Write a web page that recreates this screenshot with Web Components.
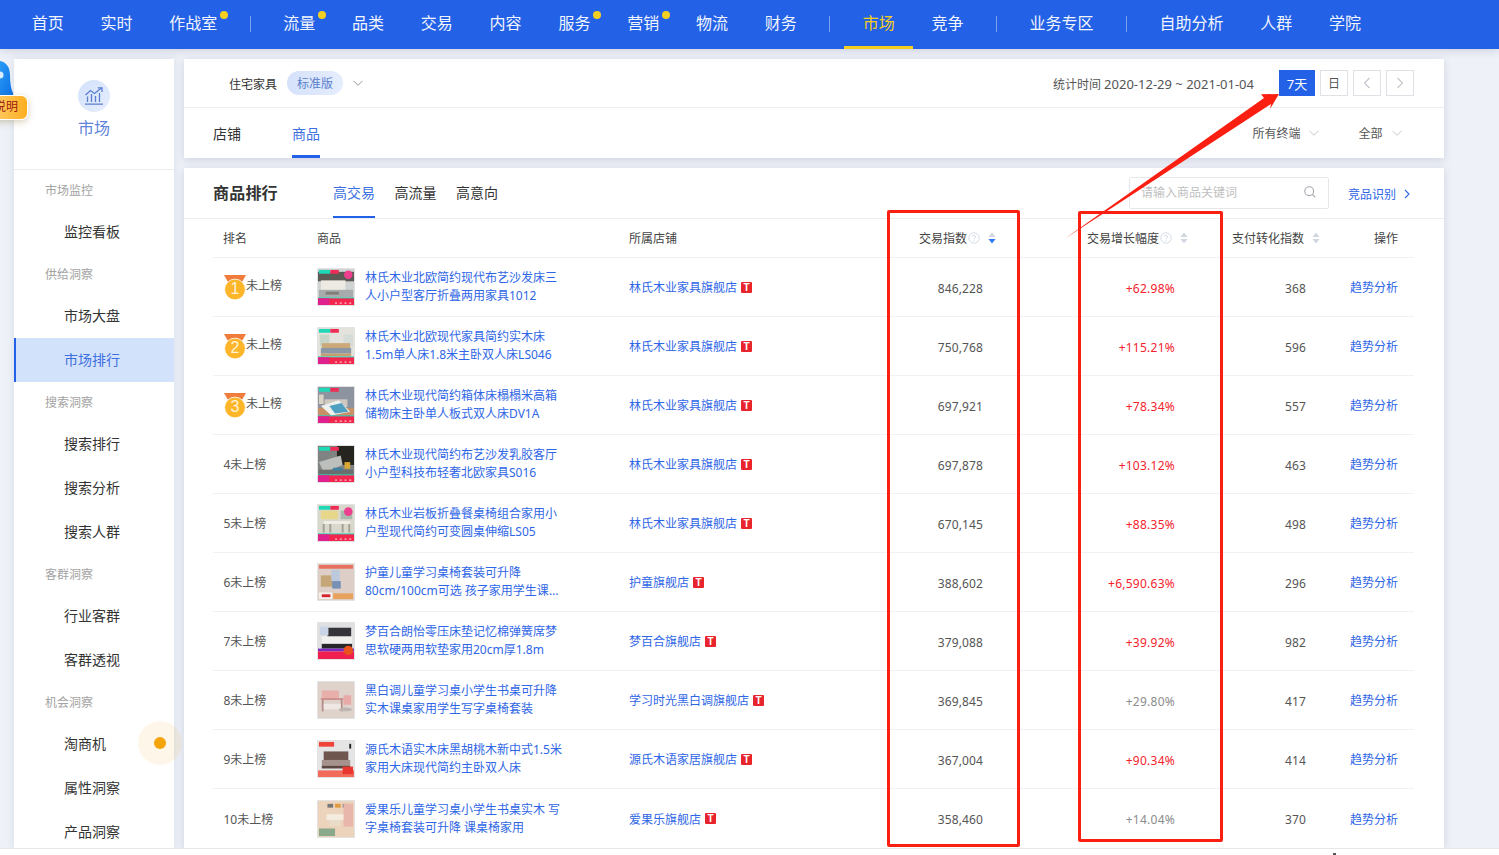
<!DOCTYPE html>
<html lang="zh">
<head>
<meta charset="utf-8">
<title>商品排行</title>
<style>
  html, body { margin: 0; padding: 0; background: #fff; }
  body { width: 1499px; height: 855px; overflow: hidden; font-family: "Noto Sans", "Noto Sans CJK SC", sans-serif; color: #333; }
</style>
</head>
<body>
<market-page></market-page>

<script>
(function () {
  const BLUE = '#2361e6';
  const chevron = (color, w = 10) => `<svg width="${w}" height="${w}" viewBox="0 0 10 10" fill="none" stroke="${color}" stroke-width="1"><path d="M0.5 2.8 5 7.3 9.5 2.8"/></svg>`;

  // 顶部导航
  class TopNav extends HTMLElement {
    constructor() {
      super();
      const items = [
        ['首页'], ['实时'], ['作战室', 'dot'], '|',
        ['流量', 'dot'], ['品类'], ['交易'], ['内容'], ['服务', 'dot'], ['营销', 'dot'], ['物流'], ['财务'], '|',
        ['市场', 'on'], ['竞争'], '|',
        ['业务专区'], '|',
        ['自助分析'], ['人群'], ['学院']
      ];
      const html = items.map(i => i === '|' ? '<i class="sep"></i>' :
        `<a class="${i[1] || ''}">${i[0]}</a>`).join('');
      this.attachShadow({ mode: 'open' }).innerHTML = `
        <style>
          :host { display: flex; align-items: stretch; height: 49px; padding-left: 13.4px; background: ${BLUE}; color: #fff; font-size: 16px; box-shadow: 0 2px 8px rgba(60,80,120,.18); position: relative; z-index: 2; }
          a { position: relative; display: flex; align-items: center; padding: 0 18.375px 3px; box-sizing: border-box; line-height: 20px; color: #f1f5fd; }
          a.dot::after { content: ''; position: absolute; top: 11px; right: 7.4px; width: 8px; height: 8px; border-radius: 50%; background: #f5cf20; }
          a.on { color: #f5cf20; border-bottom: 3px solid #f5cf20; padding-bottom: 0; }
          .sep { width: 1px; height: 16px; margin: 16px 14.125px 0; background: rgba(255,255,255,.4); }
        </style>${html}`;
    }
  }

  // 左侧菜单
  class SideMenu extends HTMLElement {
    constructor() {
      super();
      const groups = [
        ['市场监控', ['监控看板']],
        ['供给洞察', ['市场大盘', '市场排行']],
        ['搜索洞察', ['搜索排行', '搜索分析', '搜索人群']],
        ['客群洞察', ['行业客群', '客群透视']],
        ['机会洞察', ['淘商机', '属性洞察', '产品洞察']]
      ];
      const list = groups.map(g => `<div class="group">${g[0]}</div>` +
        g[1].map(n => `<div class="item${n === '市场排行' ? ' on' : ''}">${n}</div>`).join('')).join('');
      this.attachShadow({ mode: 'open' }).innerHTML = `
        <style>
          :host { display: block; width: 160px; background: #fff; box-shadow: 0 0 8px rgba(60,80,120,.12); overflow: hidden; flex: none; }
          .head { height: 111px; box-sizing: border-box; padding-top: 21px; border-bottom: 1px solid #ebedf0; display: flex; flex-direction: column; align-items: center; }
          .ico { width: 32px; height: 32px; border-radius: 50%; background: linear-gradient(135deg, #d3e1fa, #e6eefe); display: flex; align-items: center; justify-content: center; }
          .name { margin-top: 4px; font-size: 16px; line-height: 24px; color: #5d84d8; }
          .group { height: 40px; line-height: 42px; padding-left: 31px; font-size: 12px; color: #a3a3a3; }
          .item { height: 44px; line-height: 44px; padding-left: 50px; font-size: 14px; color: #333; }
          .item.on { margin: 0; padding-left: 48px; border-left: 2px solid ${BLUE}; background: #d3e2fb; color: #3c70e0; }
        </style>
        <div class="head">
          <div class="ico"><svg width="20" height="20" viewBox="0 0 20 20" fill="none" stroke="#5a7fd0" stroke-width="1.3">
            <path d="M1 18.2H19M3.5 16V10.5M7.5 16V8M11.5 16V10M15.5 16V7"/><path d="M1.5 9 6.5 4.5 10.5 7.5 17.5 2"/><path d="M13.8 1.8H18V6"/></svg></div>
          <div class="name">市场</div>
        </div>
        <div class="list">${list}</div>`;
    }
  }

  // 行业筛选卡片
  class FilterCard extends HTMLElement {
    constructor() {
      super();
      this.attachShadow({ mode: 'open' }).innerHTML = `
        <style>
          :host { display: block; background: #fff; box-shadow: 0 2px 8px rgba(60,80,120,.18); font-size: 12px; }
          .r1 { height: 48px; display: flex; align-items: center; padding: 0 30px 0 45px; border-bottom: 1px solid #ebedf0; }
          .low { padding-top: 2px; }
          .pill { margin-left: 10px; width: 56px; height: 24px; border-radius: 12px; line-height: 25px; text-align: center; background: linear-gradient(90deg, #d5e2fa, #e5edfd); color: #5a80cc; }
          .cat { margin-left: 10px; line-height: 0; }
          .date { margin-left: auto; color: #555; margin-right: 25px; white-space: nowrap; }
          .date b { font-weight: 400; font-size: 13px; }
          .btn { width: 28px; height: 26px; box-sizing: border-box; margin-left: 5px; border: 1px solid #dfe1e6; display: flex; align-items: center; justify-content: center; color: #555; }
          .btn.on { width: 36px; margin-left: 0; border: 0; background: ${BLUE}; color: #fff; font-size: 13px; }
          .r2 { height: 50px; display: flex; align-items: stretch; padding: 0 42.5px 0 29px; font-size: 14px; }
          .tab { display: flex; align-items: center; box-sizing: border-box; padding-bottom: 1px; color: #333; }
          .tab.on { margin-left: 51px; color: #3c70e0; border-bottom: 3px solid ${BLUE}; padding-top: 2px; padding-bottom: 0; }
          .sel { display: flex; align-items: center; gap: 9px; font-size: 12px; color: #555; }
          .sel span { line-height: 0; }
          .sel.a { margin-left: auto; }
          .sel.b { margin-left: 39px; }
        </style>
        <div class="r1">
          <span class="low">住宅家具</span><span class="pill">标准版</span><span class="cat">${chevron('#9a9a9a')}</span>
          <span class="date low">统计时间 <b>2020-12-29 ~ 2021-01-04</b></span>
          <span class="btn on">7天</span><span class="btn">日</span>
          <span class="btn"><svg width="8" height="12" viewBox="0 0 8 12" fill="none" stroke="#c4c7cc" stroke-width="1.2"><path d="M6.5 1 1.5 6l5 5"/></svg></span>
          <span class="btn"><svg width="8" height="12" viewBox="0 0 8 12" fill="none" stroke="#c4c7cc" stroke-width="1.2"><path d="M1.5 1l5 5-5 5"/></svg></span>
        </div>
        <div class="r2">
          <span class="tab">店铺</span><span class="tab on">商品</span>
          <div class="sel a">所有终端<span>${chevron('#c4c7cc')}</span></div>
          <div class="sel b">全部<span>${chevron('#c4c7cc')}</span></div>
        </div>`;
    }
  }

  // 商品缩略图，SVG 画的简单场景
  const stripe = (a, b) => `<rect width="12" height="4" x="1" y="1" fill="${a}"/><rect width="9" height="4" x="13" y="1" fill="${b}"/>`;
  const bottom = `<rect y="30" width="38" height="1.5" fill="#21d6b8"/><rect y="31" width="38" height="7" fill="#f5264e"/><rect width="12" height="7" y="31" fill="#e0208c"/><path d="M18 36h2M23 36h2M28 36h2M33 36h2" stroke="#fff" stroke-width="1"/>`;
  const scenes = [
    `<rect width="38" height="38" fill="#cfd3d2"/><rect width="38" height="10" y="3" fill="#5c5a55"/><rect x="3" y="12" width="26" height="11" fill="#eceae2"/><rect x="1" y="22" width="36" height="8" fill="#a8abac"/><rect x="8" y="24" width="14" height="3" fill="#807d78"/>${bottom}${stripe('#1fd8b6', '#ee2c55')}<circle cx="32" cy="6" r="4.5" fill="#ee3f8e"/>`,
    `<rect width="38" height="38" fill="#e3e2dc"/><rect x="2" y="7" width="10" height="12" fill="#c7d6c9"/><rect x="27" y="7" width="10" height="12" fill="#d5dcd8"/><rect x="4" y="16" width="30" height="6" fill="#cda878"/><rect x="3" y="21" width="32" height="6" fill="#8b99a6"/><rect x="3" y="27" width="32" height="3" fill="#c59f6f"/>${bottom}${stripe('#1fd8b6', '#ee2c55')}`,
    `<rect width="38" height="38" fill="#8d949f"/><rect y="22" width="38" height="8" fill="#c89066"/><rect x="7" y="13" width="24" height="8" fill="#cfc8c0"/><path d="M3 20 22 14 34 26 14 30Z" fill="#eef0ee"/><path d="M12 20 25 17 32 26 18 28Z" fill="#4f9fc0"/><rect width="5" height="10" x="1" y="8" fill="#d9d2c5"/>${bottom}${stripe('#1fd8b6', '#ee2c55')}`,
    `<rect width="38" height="38" fill="#7f8381"/><rect x="20" width="18" height="20" fill="#26241f"/><path d="M1 17 24 10 26 20 6 28Z" fill="#bdbfbc"/><rect x="1" y="25" width="36" height="5" fill="#6a6e6c"/><rect x="28" y="17" width="6" height="7" fill="#d9a832"/><rect x="16" y="23" width="10" height="3" fill="#3f7fa0"/>${bottom}${stripe('#1fd8b6', '#ee2c55')}`,
    `<rect width="38" height="38" fill="#d9d8cc"/><rect x="3" y="6" width="18" height="9" fill="#e6d78a"/><rect x="6" y="17" width="28" height="3" fill="#f1efe8"/><path d="M6 20v9M13 20v9M26 20v9M33 20v9" stroke="#a39f93" stroke-width="2"/><rect x="24" y="6" width="12" height="9" fill="#a9b9ae"/>${bottom}${stripe('#1fd8b6', '#ee2c55')}<circle cx="32" cy="7" r="4.5" fill="#ee3f8e"/>`,
    `<rect width="38" height="38" fill="#ddcfc8"/><rect x="1" y="1" width="36" height="4" fill="#e8705e"/><rect x="3" y="12" width="14" height="12" fill="#c4a678"/><rect x="14" y="6" width="9" height="12" fill="#bcc9dc"/><rect x="15" y="18" width="9" height="8" fill="#7690b6"/><rect x="1" y="30" width="14" height="7" fill="#f4f0ea"/><rect x="4" y="32" width="9" height="3" fill="#d6222a"/><rect x="16" y="31" width="21" height="6" fill="#e9a25c"/>`,
    `<rect width="38" height="38" fill="#dfe0e1"/><rect x="10" y="5" width="25" height="11" fill="#35343a"/><rect x="2" y="4" width="9" height="9" fill="#c9d4e6"/><rect x="4" y="14" width="32" height="8" fill="#f0f0ee"/><rect x="4" y="22" width="32" height="5" fill="#27262a"/><rect y="27" width="38" height="3" fill="#7a2bc0"/><rect y="30" width="38" height="8" fill="#ef1f4f"/><circle cx="32" cy="29" r="5" fill="#e9511d"/>`,
    `<rect width="38" height="38" fill="#dfd2cb"/><rect x="4" y="9" width="18" height="8" fill="#e7aeaa"/><rect x="3" y="17" width="24" height="2" fill="#cc8f8e"/><rect x="4" y="19" width="2" height="12" fill="#b88c88"/><rect x="24" y="19" width="2" height="12" fill="#b88c88"/><rect x="6" y="23" width="18" height="6" fill="#efe7e3"/><rect x="27" y="14" width="8" height="10" fill="#e8a9a9"/><ellipse cx="29" cy="29" rx="7" ry="2" fill="#bcb5b2"/>`,
    `<rect width="38" height="38" fill="#e5e5e6"/><rect x="1" y="1" width="16" height="5" fill="#f0443a"/><rect x="33" y="3" width="2" height="5" fill="#222"/><rect x="6" y="11" width="26" height="10" fill="#6f574f"/><rect x="4" y="20" width="30" height="6" fill="#a5928c"/><rect x="4" y="26" width="30" height="3" fill="#5d4740"/><rect y="31" width="38" height="7" fill="#f26a5a"/><rect x="26" y="27" width="11" height="8" fill="#e8372f"/>`,
    `<rect width="38" height="38" fill="#ecd3bb"/><rect x="10" y="3" width="6" height="4" fill="#777"/><rect x="18" y="3" width="6" height="4" fill="#e09a40"/><rect x="26" y="3" width="6" height="4" fill="#888"/><rect x="9" y="14" width="20" height="6" fill="#f4ecdf"/><rect x="12" y="20" width="12" height="6" fill="#e9dcc8"/><rect x="27" y="3" width="10" height="24" fill="#e9b6ab"/><rect x="1" y="29" width="17" height="8" fill="#8aa98c"/>`
  ];

  const medal = n => `<span class="medal"><svg width="22" height="25" viewBox="0 0 22 25">
      <path d="M0 0H22L18 7H4Z" fill="#f07c3c"/><circle cx="11" cy="14.5" r="10.4" fill="#fdb52a" stroke="#fff" stroke-width=".8"/>
      <text x="11" y="19" text-anchor="middle" font-family="Liberation Sans, sans-serif" font-size="16" fill="#fff3d6">${n}</text></svg></span>`;

  // 表格行
  class RankRow extends HTMLElement {
    constructor() {
      super();
      this.attachShadow({ mode: 'open' });
    }
    connectedCallback() {
      const a = n => this.getAttribute(n);
      const n = +a('rank');
      const up = a('hot') !== null;
      this.shadowRoot.innerHTML = `
        <style>
          :host { display: grid; grid-template-columns: var(--cols); height: 59px; box-sizing: border-box; border-bottom: 1px solid #f0f1f3; font-size: 12px; color: #555; }
          :host([last]) { border-bottom: 0; }
          .c { display: flex; align-items: center; min-width: 0; }
          .rank { padding-left: 10.5px; color: #555; }
          .rank.top { padding-left: 11px; }
          .rank.top b { font-weight: 400; margin: -4px 0 0 0; }
          .medal { display: block; line-height: 0; margin-top: 0; }
          .prod { padding-left: 10px; gap: 10px; }
          .thumb { flex: none; width: 38px; height: 38px; box-sizing: border-box; border: 1px solid #e3e3e3; line-height: 0; overflow: hidden; }
          .thumb svg { filter: blur(.4px); }
          .title { width: 200px; line-height: 18px; color: #2f66e6; display: -webkit-box; -webkit-box-orient: vertical; -webkit-line-clamp: 2; overflow: hidden; }
          .store { padding-left: 10px; color: #2f66e6; gap: 4px; }
          .t { width: 11px; height: 11px; border-radius: 1px; background: #e8242d; color: #fff; font: bold 10px/11px "Liberation Sans", sans-serif; text-align: center; }
          .num { justify-content: flex-end; padding-right: 13px; padding-top: 2px; letter-spacing: .12px; }
          .up { color: ${up ? '#f5222d' : '#8c8c8c'}; letter-spacing: .25px; }
          .op { justify-content: flex-end; padding-right: 16px; color: #2f66e6; }
        </style>
        <div class="c rank ${n < 4 ? 'top' : ''}">${n < 4 ? medal(n) + '<b>未上榜</b>' : n + '未上榜'}</div>
        <div class="c prod"><span class="thumb"><svg width="36" height="36" viewBox="0 0 38 38">${scenes[n - 1]}</svg></span><span class="title"><slot></slot></span></div>
        <div class="c store">${a('store')}<span class="t">T</span></div>
        <div class="c num">${a('index')}</div>
        <div class="c num up">${a('growth')}</div>
        <div class="c num" style="padding-right:14px">${a('conv')}</div>
        <div class="c op">趋势分析</div>`;
    }
  }

  const help = `<svg width="12" height="12" viewBox="0 0 12 12" fill="none" stroke="#d5dde8" stroke-width="1"><circle cx="6" cy="6" r="5.2"/><path d="M4.4 4.6C4.6 3 7.6 3 7.6 4.8 7.6 6 6 6 6 7.3M6 8.4v1"/></svg>`;
  const sort = (on) => `<svg width="8" height="12" viewBox="0 0 8 12"><path d="M4 0.5 7.5 5H.5Z" fill="#cfd6e0"/><path d="M4 11.5 7.5 7H.5Z" fill="${on ? '#2d7bf0' : '#cfd6e0'}"/></svg>`;

  // 排行卡片
  class RankCard extends HTMLElement {
    constructor() {
      super();
      this.attachShadow({ mode: 'open' }).innerHTML = `
        <style>
          :host { display: block; background: #fff; box-shadow: 0 2px 8px rgba(60,80,120,.18); flex: 1; min-height: 0; overflow: hidden; --cols: 94px 312px 250px 127px 192px 132px 94px; }
          .bar { height: 50px; box-sizing: border-box; display: flex; align-items: stretch; padding: 0 30px 0 29px; }
          .bar-line { height: 1px; background: #ebedf0; }
          h2 { margin: 0; font-size: 16px; line-height: 50px; font-weight: 700; color: #333; width: 120px; flex: none; letter-spacing: .2px; }
          .tab { font-size: 14px; margin-right: 19.5px; width: 42px; text-align: center; box-sizing: border-box; line-height: 50px; color: #333; white-space: nowrap; }
          .tab.on { color: #3c70e0; border-bottom: 2px solid ${BLUE}; }
          .search { margin: 9px 0 0 auto; width: 200px; height: 32px; box-sizing: border-box; border: 1px solid #e6e7ea; border-radius: 2px; display: flex; align-items: center; justify-content: space-between; padding: 0 12px 2px 11px; font-size: 12px; color: #c0c0c0; }
          .link { margin-left: 19px; display: flex; align-items: center; gap: 8px; padding-top: 1px; padding-right: 4px; font-size: 12px; color: #2f66e6; }
          .table { margin: 0 30px 0 29px; }
          .thead { display: grid; grid-template-columns: var(--cols); height: 39px; box-sizing: border-box; border-bottom: 1px solid #f0f1f3; font-size: 12px; color: #444; }
          .thead div { display: flex; align-items: center; }
          .thead .r { justify-content: flex-end; }
          .thead .l { padding-left: 10px; }
        </style>
        <div class="bar">
          <h2>商品排行</h2>
          <span class="tab on">高交易</span><span class="tab">高流量</span><span class="tab">高意向</span>
          <span class="search"><span>请输入商品关键词</span><svg width="12" height="12" viewBox="0 0 12 12" fill="none" stroke="#a4a7ad" stroke-width="1.1"><circle cx="5.2" cy="5.2" r="4.4"/><path d="M8.4 8.4 11.3 11.3"/></svg></span>
          <span class="link">竞品识别 <svg width="6" height="10" viewBox="0 0 6 10" fill="none" stroke="#2f66e6" stroke-width="1.1"><path d="M1 1l4 4-4 4"/></svg></span>
        </div>
        <div class="bar-line"></div>
        <div class="table">
          <div class="thead">
            <div class="l">排名</div><div class="l">商品</div><div class="l">所属店铺</div>
            <div class="r">交易指数<span style="margin:0 8px 0 1px;line-height:0">${help}</span>${sort(true)}</div>
            <div class="r">交易增长幅度<span style="margin:0 8px 0 1px;line-height:0">${help}</span>${sort(false)}</div>
            <div class="r">支付转化指数<span style="margin-left:8px;line-height:0">${sort(false)}</span></div>
            <div class="r" style="padding-right:16px">操作</div>
          </div>
          <slot></slot>
        </div>`;
    }
  }

  // 整页
  class MarketPage extends HTMLElement {
    constructor() {
      super();
      const rows = [
        [1, '林氏木业北欧简约现代布艺沙发床三人小户型客厅折叠两用家具1012', '林氏木业家具旗舰店', '846,228', '+62.98%', 368, 1],
        [2, '林氏木业北欧现代家具简约实木床<br>1.5m单人床1.8米主卧双人床LS046', '林氏木业家具旗舰店', '750,768', '+115.21%', 596, 1],
        [3, '林氏木业现代简约箱体床榻榻米高箱储物床主卧单人板式双人床DV1A', '林氏木业家具旗舰店', '697,921', '+78.34%', 557, 1],
        [4, '林氏木业现代简约布艺沙发乳胶客厅小户型科技布轻奢北欧家具S016', '林氏木业家具旗舰店', '697,878', '+103.12%', 463, 1],
        [5, '林氏木业岩板折叠餐桌椅组合家用小户型现代简约可变圆桌伸缩LS05', '林氏木业家具旗舰店', '670,145', '+88.35%', 498, 1],
        [6, '护童儿童学习桌椅套装可升降<br>80cm/100cm可选 孩子家用学生课桌椅', '护童旗舰店', '388,602', '+6,590.63%', 296, 1],
        [7, '梦百合朗怡零压床垫记忆棉弹簧席梦思软硬两用软垫家用20cm厚1.8m', '梦百合旗舰店', '379,088', '+39.92%', 982, 1],
        [8, '黑白调儿童学习桌小学生书桌可升降实木课桌家用学生写字桌椅套装', '学习时光黑白调旗舰店', '369,845', '+29.80%', 417, 0],
        [9, '源氏木语实木床黑胡桃木新中式1.5米<br>家用大床现代简约主卧双人床', '源氏木语家居旗舰店', '367,004', '+90.34%', 414, 1],
        [10, '爱果乐儿童学习桌小学生书桌实木 写<br>字桌椅套装可升降 课桌椅家用', '爱果乐旗舰店', '358,460', '+14.04%', 370, 0]
      ];
      const rowHtml = rows.map(r => `<rank-row rank="${r[0]}" store="${r[2]}" index="${r[3]}" growth="${r[4]}" conv="${r[5]}"${r[6] ? ' hot' : ''}${r[0] === 10 ? ' last' : ''}>${r[1]}</rank-row>`).join('');
      this.attachShadow({ mode: 'open' }).innerHTML = `
        <style>
          :host { display: block; position: relative; width: 1499px; height: 855px; overflow: hidden; }
          .page { height: 848px; background: #eef1f7; overflow: hidden; display: flex; flex-direction: column; }
          .body { flex: 1; min-height: 0; display: flex; gap: 10px; padding: 10px 55px 0 14px; }
          .main { flex: 1; min-width: 0; display: flex; flex-direction: column; gap: 10px; }
          .foot { height: 7px; box-sizing: border-box; background: #fff; border-top: 1px solid #e6e8ec; }
          .mark { position: absolute; box-sizing: border-box; border: 3px solid #fb1f12; border-radius: 2px; }
          .arrow { position: absolute; left: 0; top: 0; }
          .pulse { position: absolute; left: 138px; top: 721px; width: 44px; height: 44px; border-radius: 50%; background: rgba(245,163,10,.09); display: flex; align-items: center; justify-content: center; }
          .pulse i { width: 12px; height: 12px; border-radius: 50%; background: #f5a30a; }
          .mascot { position: absolute; left: 0; top: 60px; line-height: 0; }
          .tag { position: absolute; left: -24px; top: 95px; width: 52px; height: 25px; box-sizing: border-box; border-radius: 7px; padding-left: 17px; background: linear-gradient(90deg, #ffdc8a, #fdae1f); border: 1.5px solid #fff; box-shadow: 0 2px 7px rgba(120,90,20,.3); font-size: 12px; line-height: 22px; color: #9c1a12; white-space: nowrap; }
          .speck { position: absolute; left: 1333px; top: 853px; width: 3px; height: 2px; background: #555; }
        </style>
        <div class="page">
          <top-nav></top-nav>
          <div class="body">
            <side-menu></side-menu>
            <div class="main">
              <filter-card></filter-card>
              <rank-card>${rowHtml}</rank-card>
            </div>
          </div>
        </div>
        <div class="foot"></div>
        <div class="mascot"><svg width="14" height="38" viewBox="0 0 14 38"><defs><linearGradient id="m" x1="0" y1="0" x2="1" y2="1"><stop offset="0" stop-color="#2a9bf5"/><stop offset="1" stop-color="#0b6fe6"/></linearGradient></defs><path d="M0 1C6 2 10 7 10 15 10 23 11 29 13 33L13 37H0Z" fill="url(#m)"/><ellipse cx="0" cy="15" rx="3.5" ry="3.5" fill="#d6eeff"/></svg></div>
        <div class="tag">说明</div>
        <div class="pulse"><i></i></div>
        <div class="mark" style="left:887px;top:210px;width:133px;height:637px"></div>
        <div class="mark" style="left:1078px;top:211px;width:145px;height:631px"></div>
        <svg class="arrow" width="1499" height="855" viewBox="0 0 1499 855"><polygon points="1065,238.5 1264,98 1261,94.3 1279,94 1270,109 1271,104" fill="#fb1f12"/></svg>
        <i class="speck"></i>`;
    }
  }

  window.customElements.define('top-nav', TopNav);
  window.customElements.define('side-menu', SideMenu);
  window.customElements.define('filter-card', FilterCard);
  window.customElements.define('rank-row', RankRow);
  window.customElements.define('rank-card', RankCard);
  window.customElements.define('market-page', MarketPage);
})();
</script>
</body>
</html>
